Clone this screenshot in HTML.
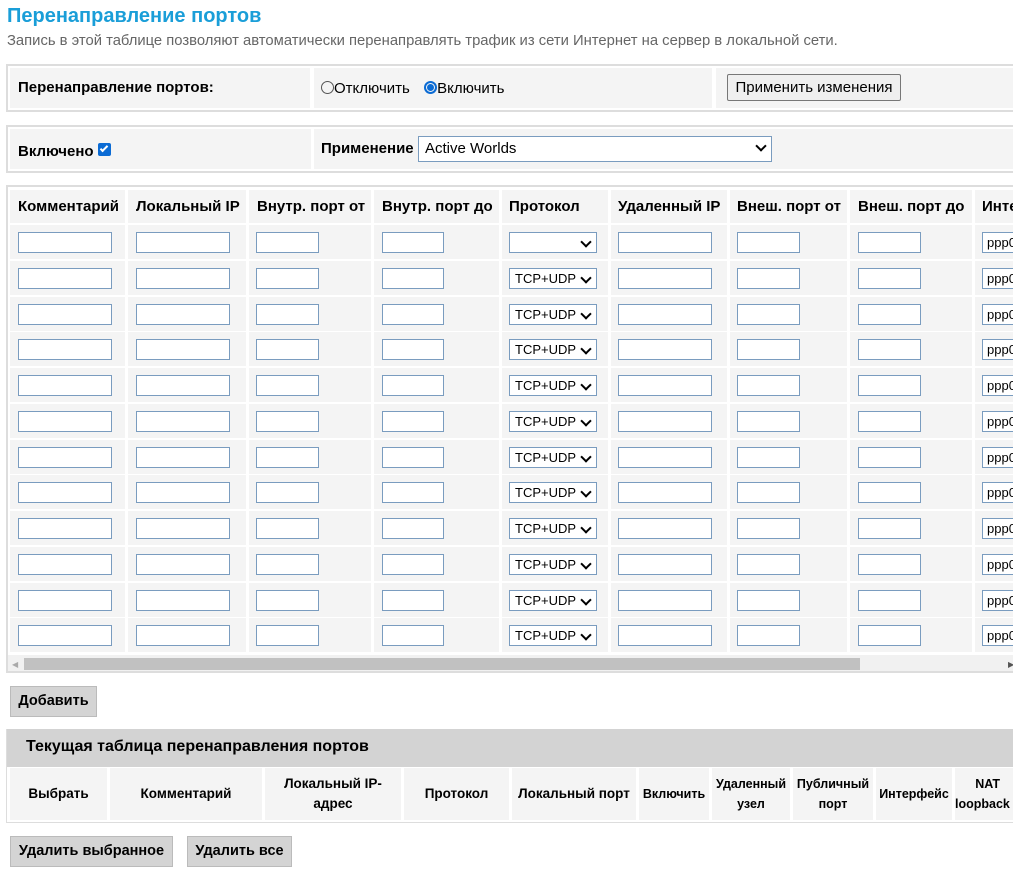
<!DOCTYPE html>
<html><head><meta charset="utf-8"><style>
*{box-sizing:border-box;margin:0;padding:0}
body{width:1013px;height:873px;overflow:hidden;background:#fff;font-family:"Liberation Sans",Arial,sans-serif;position:relative;color:#000}
.a{position:absolute}
h1{position:absolute;left:7px;top:5px;font-size:20px;color:#1a9ed8;font-weight:bold}
.sub{left:7px;top:33px;font-size:14.8px;color:#666;white-space:nowrap}
.box{border:2px solid #ddd;border-right:none}
.c{position:absolute;background:#f4f4f4}
.b{font-weight:bold;font-size:15px;white-space:nowrap}
.inp{position:absolute;height:21px;border:1px solid #7a9cbf;background:#fff}
.sel{position:absolute;height:21px;border:1px solid #7a9cbf;background:#fff;font-size:13px;padding-left:5px;line-height:19px}
.sel:after{content:"";position:absolute;right:6px;top:5px;width:6px;height:6px;border-right:2px solid #000;border-bottom:2px solid #000;transform:rotate(45deg)}
.btn{position:absolute;background:#d4d4d4;border:1px solid #bbb;font-weight:bold;font-size:14.5px;text-align:center;line-height:28px;white-space:nowrap}
.th{font-weight:bold;font-size:13.5px;text-align:center;display:flex;align-items:center;justify-content:center;line-height:20px}
</style></head><body>
<h1>Перенаправление портов</h1>
<div class="a sub">Запись в этой таблице позволяют автоматически перенаправлять трафик из сети Интернет на сервер в локальной сети.</div>

<div class="a box" style="left:6px;top:64px;width:1007px;height:48px"></div>
<div class="c b" style="left:10px;top:68px;width:300px;height:40px;padding:11px 8px">Перенаправление портов:</div>
<div class="c" style="left:314px;top:68px;width:398px;height:40px;font-size:15px;padding:12px 7px;white-space:nowrap">
<span style="display:inline-block;width:13px;height:13px;border:1px solid #555;border-radius:50%;vertical-align:-1px"></span>Отключить&nbsp;
<span style="display:inline-block;width:13px;height:13px;border:2px solid #0b6bd4;border-radius:50%;vertical-align:-1px;position:relative;margin-left:6px"><span style="position:absolute;left:1px;top:1px;width:7px;height:7px;background:#0b6bd4;border-radius:50%"></span></span>Включить</div>
<div class="c" style="left:716px;top:68px;width:297px;height:40px"></div>
<div class="a" style="left:727px;top:74px;width:174px;height:27px;border:1px solid #777;border-radius:2px;background:#efefef;font-size:15px;text-align:center;line-height:25px;white-space:nowrap">Применить изменения</div>

<div class="a box" style="left:6px;top:125px;width:1007px;height:48px"></div>
<div class="c b" style="left:10px;top:129px;width:301px;height:40px;padding:14px 8px">Включено <span style="display:inline-block;width:13px;height:13px;background:#0b6bd4;border-radius:2px;vertical-align:0;position:relative"><span style="position:absolute;left:4px;top:1px;width:4px;height:8px;border-right:2px solid #fff;border-bottom:2px solid #fff;transform:rotate(45deg)"></span></span></div>
<div class="c b" style="left:314px;top:129px;width:699px;height:40px;padding:11px 7px">Применение</div>
<div class="sel" style="left:418px;top:136px;width:354px;height:26px;font-size:15px;line-height:24px;padding-left:6px">Active Worlds</div>

<div class="a box" style="left:6px;top:185px;width:1007px;height:488px"></div>
<div class="c b" style="left:10px;top:190px;width:115px;height:33px;padding:8px 8px">Комментарий</div>
<div class="c b" style="left:128px;top:190px;width:118px;height:33px;padding:8px 8px">Локальный IP</div>
<div class="c b" style="left:249px;top:190px;width:122px;height:33px;padding:8px 8px">Внутр. порт от</div>
<div class="c b" style="left:374px;top:190px;width:125px;height:33px;padding:8px 8px">Внутр. порт до</div>
<div class="c b" style="left:502px;top:190px;width:106px;height:33px;padding:8px 7px">Протокол</div>
<div class="c b" style="left:611px;top:190px;width:116px;height:33px;padding:8px 7px">Удаленный IP</div>
<div class="c b" style="left:730px;top:190px;width:117px;height:33px;padding:8px 7px">Внеш. порт от</div>
<div class="c b" style="left:850px;top:190px;width:122px;height:33px;padding:8px 8px">Внеш. порт до</div>
<div class="c b" style="left:975px;top:190px;width:38px;height:33px;padding:8px 7px;overflow:hidden">Инте</div>

<div id="rows"></div>
<script>
var tops=[225,261,297,332,368,404,440,475,511,547,583,618];
var L=[10,128,249,374,502,611,730,850,975],W=[115,118,122,125,106,116,117,122,38];
var iL=[18,136,256,382,509,618,737,858,982],iW=[94,94,63,62,88,94,63,63,40];
var h="";
tops.forEach(function(t,r){
 for(var k=0;k<9;k++){
  h+='<div class="c" style="left:'+L[k]+'px;top:'+t+'px;width:'+W[k]+'px;height:34px"></div>';
  if(k==4) h+='<div class="sel" style="left:509px;top:'+(t+7)+'px;width:88px">'+(r?'TCP+UDP':'')+'</div>';
  else if(k==8) h+='<div class="inp" style="left:982px;top:'+(t+7)+'px;width:40px;font-size:13px;padding-left:4px;line-height:19px">ppp0</div>';
  else h+='<div class="inp" style="left:'+iL[k]+'px;top:'+(t+7)+'px;width:'+iW[k]+'px"></div>';
 }
});
document.getElementById("rows").innerHTML=h;
</script>
<div class="a" style="left:8px;top:655px;width:1005px;height:16px;background:#f1f1f1"></div>
<div class="a" style="left:24px;top:658px;width:836px;height:12px;background:#c1c1c1"></div>
<div class="a" style="left:12px;top:660px;font-size:8px;color:#aaa">&#9664;</div>
<div class="a" style="left:1008px;top:660px;font-size:8px;color:#555">&#9654;</div>

<div class="btn" style="left:10px;top:686px;width:87px;height:31px">Добавить</div>

<div class="a" style="left:6px;top:729px;width:1007px;height:94px;border:1px solid #ddd;border-right:none"></div>
<div class="a b" style="left:7px;top:729px;width:1006px;height:38px;background:#d3d3d3;padding:9px 19px;font-size:16px">Текущая таблица перенаправления портов</div>
<div class="c th" style="left:10px;top:768px;width:97px;height:52px">Выбрать</div>
<div class="c th" style="left:110px;top:768px;width:152px;height:52px">Комментарий</div>
<div class="c th" style="left:265px;top:768px;width:136px;height:52px">Локальный IP-<br>адрес</div>
<div class="c th" style="left:404px;top:768px;width:105px;height:52px">Протокол</div>
<div class="c th" style="left:512px;top:768px;width:124px;height:52px">Локальный порт</div>
<div class="c th" style="left:639px;top:768px;width:70px;height:52px;font-size:12.5px">Включить</div>
<div class="c th" style="left:712px;top:768px;width:78px;height:52px;font-size:12.5px">Удаленный<br>узел</div>
<div class="c th" style="left:793px;top:768px;width:80px;height:52px;font-size:12.5px">Публичный<br>порт</div>
<div class="c th" style="left:876px;top:768px;width:76px;height:52px;font-size:12.5px">Интерфейс</div>
<div class="c th" style="left:955px;top:768px;width:58px;height:52px;font-size:12.5px;justify-content:flex-start;white-space:nowrap;overflow:hidden">&nbsp;&nbsp;&nbsp;NAT<br>loopback</div>

<div class="btn" style="left:10px;top:836px;width:163px;height:31px">Удалить выбранное</div>
<div class="btn" style="left:187px;top:836px;width:105px;height:31px">Удалить все</div>
</body></html>
